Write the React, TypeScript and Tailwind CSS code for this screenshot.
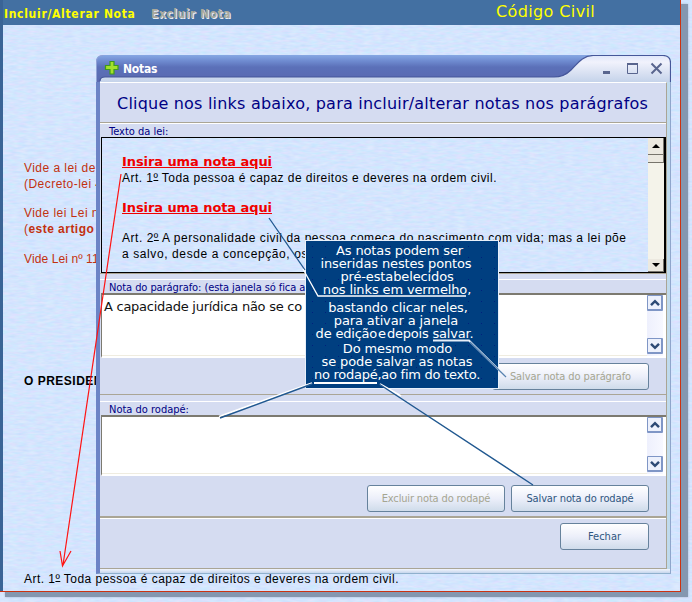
import React, { type ReactNode } from "react";

const ARIAL = "font-['Liberation_Sans',Arial,sans-serif]";
const TAHOMA = "font-['DejaVu_Sans_Condensed','DejaVu_Sans',sans-serif]";
const VERDANA = "font-['DejaVu_Sans',Verdana,sans-serif]";

function Paper({ id }: { id: string }) {
  return (
    <svg className="pointer-events-none absolute inset-0 h-full w-full" aria-hidden="true">
      <filter id={id} x="0" y="0" width="100%" height="100%" colorInterpolationFilters="sRGB">
        <feTurbulence type="fractalNoise" baseFrequency="0.11 0.42" numOctaves="2" seed="7" />
        <feColorMatrix values="0.14 0 0 0 0.762  0 0.08 0 0 0.858  0 0 0.03 0 0.98  0 0 0 0 1" />
      </filter>
      <rect width="100%" height="100%" filter={`url(#${id})`} />
    </svg>
  );
}

function Ordinal() {
  return <span className="underline decoration-1 underline-offset-[-2px]">º</span>;
}

function Button({ children, className, disabled }: { children: ReactNode; className: string; disabled?: boolean }) {
  return (
    <button
      className={`${TAHOMA} h-[27px] rounded-[3px] border border-[#66829c] bg-linear-to-b from-white via-[#eceffa] to-[#cfdcea] text-[11px] leading-[25px] whitespace-nowrap ${disabled ? "text-[#a5a591]" : "text-[#2f5680]"} ${className}`}
    >
      {children}
    </button>
  );
}

function Chevron({ up }: { up?: boolean }) {
  return (
    <div className="flex h-4 w-4 items-center justify-center rounded-[1px] border border-r-2 border-b-2 border-[#7f96c6] bg-[#edf1fc]">
      <svg width="10" height="8" viewBox="0 0 10 8">
        <path d={up ? "M1 6.2 5 2.2 9 6.2" : "M1 1.8 5 5.8 9 1.8"} fill="none" stroke="#2d4a75" strokeWidth="2.4" />
      </svg>
    </div>
  );
}

function NoteArea({ className, children }: { className: string; children?: ReactNode }) {
  return (
    <div className={`ml-px flex w-[565px] justify-between border-t-2 border-b-2 border-l border-t-[#7c7a70] border-b-white border-l-[#7c7a70] bg-white ${className}`}>
      <div className={`${VERDANA} flex-1 border-b border-[#efece0] pt-[3px] pl-0.5 text-[13px] leading-[17px] tracking-[-0.26px] whitespace-nowrap text-[#111]`}>
        {children}
      </div>
      <div className="mr-[3px] flex w-4 flex-col justify-between bg-linear-to-r from-[#eef0fd] to-[#f7f8ff] pb-0.5">
        <Chevron up />
        <Chevron />
      </div>
    </div>
  );
}

function Label({ children, className = "" }: { children: ReactNode; className?: string }) {
  return (
    <div className={`${TAHOMA} h-[13px] pl-[9px] text-[11px] leading-[15px] whitespace-nowrap text-[#000084] ${className}`}>
      {children}
    </div>
  );
}

function LawBox() {
  return (
    <div className="relative ml-px h-[136px] w-[565px] overflow-hidden border border-r-2 border-black">
      <Paper id="paper-law" />
      <div className="relative flex h-full justify-between">
        <div className={`${ARIAL} w-[540px] pt-[16px] pl-[20px] text-[12px] leading-4 tracking-[0.46px] whitespace-nowrap text-black`}>
          <a className={`${VERDANA} block h-4 text-[13px] font-bold tracking-[-0.08px] text-[#f00000] underline`}>Insira uma nota aqui</a>
          <p>Art. 1<Ordinal /> Toda pessoa é capaz de direitos e deveres na ordem civil.</p>
          <a className={`${VERDANA} mt-[14px] block h-4 text-[13px] font-bold tracking-[-0.08px] text-[#f00000] underline`}>Insira uma nota aqui</a>
          <p className="mt-[14px] tracking-[0.53px]">Art. 2<Ordinal /> A personalidade civil da pessoa começa do nascimento com vida; mas a lei põe</p>
          <p className="tracking-[0.6px]">a salvo, desde a concepção, os</p>
        </div>
        <div className="flex w-4 flex-col bg-[#f4f3ea]">
          <div className="flex h-[17px] items-center justify-center border-r border-b border-[#77746b] bg-[#ece9e0]">
            <svg width="8" height="4"><path d="M0 4 4 0 8 4z" fill="#000" /></svg>
          </div>
          <div className="h-2 border-r border-b border-[#77746b] bg-[#ece9e0]" />
          <div className="mt-auto flex h-[13px] items-center justify-center border-r border-b border-[#77746b] bg-[#ece9e0]">
            <svg width="8" height="4"><path d="M0 0 4 4 8 0z" fill="#000" /></svg>
          </div>
        </div>
      </div>
    </div>
  );
}

function TitleBar() {
  return (
    <div className="relative h-[27px]">
      <svg className="absolute inset-0" width="575" height="27">
        <defs>
          <linearGradient id="bar" x1="0" y1="0" x2="0" y2="1">
            <stop offset="0" stopColor="#87a8e4" />
            <stop offset=".22" stopColor="#6f8bd0" />
            <stop offset=".45" stopColor="#5b70b8" />
            <stop offset="1" stopColor="#5b69b0" />
          </linearGradient>
          <linearGradient id="tab" x1="0" y1="0" x2="0" y2="1">
            <stop offset="0" stopColor="#dfe6fa" />
            <stop offset=".25" stopColor="#f1f2fc" />
            <stop offset="1" stopColor="#c5d3ea" />
          </linearGradient>
        </defs>
        <path d="M4 27V23Q4 21 7 21H470V.5H567Q574.5 .5 574.5 8V27z" fill="url(#tab)" />
        <path d="M0 27V7Q0 0 7 0H497C486 1 482 8 475 15C470 20 465 22 458 22H9Q4 22 4 27z" fill="url(#bar)" />
        <path d="M4 26Q4 22 9 22H458C465 22 470 20 475 15C482 8 486 1 497 .5H567Q574.5 .5 574.5 8V27" fill="none" stroke="#46579a" strokeWidth="1.2" />
        <path d="M.5 27V7Q.5 .5 7 .5" fill="none" stroke="#91a2d5" />
        <path d="M9.500 10.500H14V6.500h4v4H22v4H18v4.500h-4v-4.500H9.500z" fill="#a3e12c" stroke="#3f9a1c" strokeWidth="1.2" />
        <path d="M507 16h7v3h-7z" fill="#59658e" />
        <path d="M531.500 9.500h10v9h-10z" fill="none" stroke="#59658e" />
        <path d="M531 8h11v2h-11z" fill="#59658e" />
        <path d="m555.500 8.500 10 10m0-10-10 10" fill="none" stroke="#59658e" strokeWidth="2" />
      </svg>
      <div className={`${TAHOMA} relative pt-[6px] pl-[27px] text-[12px] leading-4 font-bold tracking-[-0.2px] text-white`}>Notas</div>
    </div>
  );
}

function NotesWindow() {
  return (
    <div className="absolute top-[55px] left-[96px] flex h-[519px] w-[575px] flex-col">
      <TitleBar />
      <div className="flex h-[492px] flex-col border-r border-b border-l-[4px] border-r-[#8fa6cc] border-b-[#8fb0cd] border-l-[#6c84c6] bg-linear-to-r from-[#d5dcf1] from-90% to-[#bfdbed]">
        <div className="flex h-[487px] w-[567px] flex-col border-t border-r border-b border-t-white border-r-[#aaa595] border-b-[#aaa595] bg-[#d5dcf1]">
          <h1 className={`${VERDANA} h-[39px] pl-[17px] text-[16px] leading-[41px] tracking-[0.21px] whitespace-nowrap text-[#000084]`}>
            Clique nos links abaixo, para incluir/alterar notas nos parágrafos
          </h1>
          <div className="h-0.5 shrink-0 border-t border-b border-t-[#aaa595] border-b-white" />
          <Label>Texto da lei:</Label>
          <LawBox />
          <div className="h-px bg-[#aaa595]" />
          <div className="mt-[5px] h-px bg-white" />
          <Label className="tracking-[-0.08px]">Nota do parágrafo: (esta janela só fica a</Label>
          <NoteArea className="h-[65px]">A capacidade jurídica não se co</NoteArea>
          <div className="flex h-[36px] justify-end pt-[5px] pr-[17px]">
            <Button disabled className="w-[157px] tracking-[-0.1px]">Salvar nota do parágrafo</Button>
          </div>
          <div className="h-px bg-[#aaa595]" />
          <div className="mt-[6px] h-px bg-white" />
          <Label>Nota do rodapé:</Label>
          <NoteArea className="h-[61px]" />
          <div className="flex h-[40px] justify-end gap-1.5 pt-[9px] pr-[17px]">
            <Button disabled className="w-[138px] tracking-[-0.15px]">Excluir nota do rodapé</Button>
            <Button className="w-[138px] tracking-[-0.12px]">Salvar nota do rodapé</Button>
          </div>
          <div className="h-[3px] border-t-2 border-b border-t-[#aaa595] border-b-white" />
          <div className="flex justify-end pt-1 pr-[17px]">
            <Button className="w-[89px]">Fechar</Button>
          </div>
        </div>
        <div className="h-1 w-[570px] bg-linear-to-b from-[#f2f5fd] to-[#c6d6ec]" />
      </div>
    </div>
  );
}

function Callout() {
  return (
    <div className={`${VERDANA} absolute top-[240px] left-[305px] flex h-[149px] w-[194px] flex-col items-center border border-[#e8f0fa] bg-[#003f80] bg-[radial-gradient(#00207c_0.6px,transparent_0.9px)] bg-size-[13px_11px] pt-[3px] pr-[10px] text-[13px] leading-[13px] tracking-[-0.13px] whitespace-nowrap text-white`}>
      <p className="pl-[5px]">As notas podem ser</p>
      <p className="pr-0.5">inseridas nestes pontos</p>
      <p>pré-estabelecidos</p>
      <p>nos links em vermelho,</p>
      <p className="mt-[5px] pl-0.5">bastando clicar neles,</p>
      <p className="pr-0.5">para ativar a janela</p>
      <p className="pr-[5px] tracking-[-0.2px]">de edição<span className="px-px">e</span>depois salvar.</p>
      <p className="mt-0.5 pl-px">Do mesmo modo</p>
      <p>se pode salvar as notas</p>
      <p className="tracking-[-0.26px]">no rodapé,ao fim do texto.</p>
    </div>
  );
}

function Pointers() {
  return (
    <svg className="pointer-events-none absolute inset-0" width="692" height="602" fill="none">
      <path d="M121 174 63 565M60 551 62.500 566 71 551" stroke="#ff1414" strokeWidth="1.2" />
      <path d="M269 218 305 270" stroke="#205890" strokeWidth="1.3" />
      <path d="M303 269 318 296H466" stroke="#fff" strokeWidth="1.3" />
      <path d="M433 340.500H469L499 370" stroke="#e6eef8" strokeWidth="1.8" />
      <path d="M470 342 506 377" stroke="#5782b0" strokeWidth="1.2" />
      <path d="M314 383H377M380 384 401 396M312 383 219 416.500" stroke="#fff" strokeWidth="1.8" />
      <path d="M312 384 220 418M379 384 533 485" stroke="#205890" strokeWidth="1.4" />
    </svg>
  );
}

export default function App() {
  return (
    <div className="relative h-[602px] w-[692px] overflow-hidden bg-[#d4e4fc]">
      <Paper id="paper-page" />
      <div className="absolute top-1 left-[5px] h-[593px] w-[683px] bg-[#8497b0] shadow-[0_0_2px_#a4b4cc]" />
      <main className="relative h-[592px] w-[681px] overflow-hidden border-r border-b border-[#cc3210]">
        <Paper id="paper-main" />
        <div className="relative h-full border-l-[3px] border-[#3a6496]">
          <header className="flex h-[25px] bg-[#4370a2] font-bold">
            <nav className={`${TAHOMA} flex flex-1 pt-[5px] pl-px text-[12px] leading-[18px] whitespace-nowrap`}>
              <a className="w-[147px] tracking-[0.7px] text-[#ffff00]">Incluir/Alterar Nota</a>
              <a className="tracking-[0.52px] text-[#aaa99c] [text-shadow:1px_1px_0_#e8ecf4]">Excluir Nota</a>
            </nav>
            <h2 className={`${VERDANA} w-[184px] text-[16px] leading-[23px] font-normal tracking-[0.38px] text-[#ffff00]`}>Código Civil</h2>
          </header>
          <div className={`${ARIAL} flex w-[380px] flex-col pt-[135px] pl-[21px] text-[12px] leading-4 tracking-[0.46px] whitespace-nowrap text-[#c2310f]`}>
            <p>Vide a lei de</p>
            <p>(Decreto-lei 4</p>
            <p className="mt-[13px]">Vide lei Lei n</p>
            <p>(<b>este artigo</b></p>
            <p className="mt-[14px] tracking-[0.1px]">Vide Lei nº 11</p>
            <p className="mt-[106px] font-bold tracking-[0.5px] text-black">O PRESIDEN</p>
            <p className="mt-[182px] text-black">Art. 1<Ordinal /> Toda pessoa é capaz de direitos e deveres na ordem civil.</p>
          </div>
        </div>
      </main>
      <NotesWindow />
      <Callout />
      <Pointers />
    </div>
  );
}
